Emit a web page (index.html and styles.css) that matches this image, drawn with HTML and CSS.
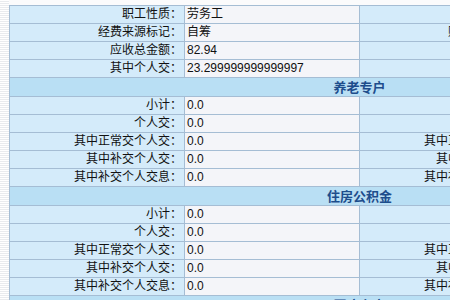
FILE: index.html
```html
<!DOCTYPE html>
<html lang="zh-CN">
<head>
<meta charset="utf-8">
<title>缴费信息</title>
<link rel="stylesheet" href="styles.css">
</head>
<body>
<div class="page">
<table class="info">
<colgroup><col class="c"><col class="c"><col class="c"><col class="c"></colgroup>
<tr><th>职工性质：</th><td>劳务工</td><th></th><td></td></tr>
<tr><th>经费来源标记：</th><td>自筹</td><th>账户类别标记：</th><td></td></tr>
<tr><th>应收总金额：</th><td>82.94</td><th></th><td></td></tr>
<tr><th>其中个人交：</th><td>23.299999999999997</td><th></th><td></td></tr>
<tr class="sec"><td colspan="4">养老专户</td></tr>
<tr><th>小计：</th><td>0.0</td><th>单位交：</th><td>0.0</td></tr>
<tr><th>个人交：</th><td>0.0</td><th>单位交：</th><td>0.0</td></tr>
<tr><th>其中正常交个人交：</th><td>0.0</td><th>其中正常交单位交：</th><td>0.0</td></tr>
<tr><th>其中补交个人交：</th><td>0.0</td><th>其中补交单位交：</th><td>0.0</td></tr>
<tr><th>其中补交个人交息：</th><td>0.0</td><th>其中补交单位交息：</th><td>0.0</td></tr>
<tr class="sec"><td colspan="4">住房公积金</td></tr>
<tr><th>小计：</th><td>0.0</td><th>单位交：</th><td>0.0</td></tr>
<tr><th>个人交：</th><td>0.0</td><th>单位交：</th><td>0.0</td></tr>
<tr><th>其中正常交个人交：</th><td>0.0</td><th>其中正常交单位交：</th><td>0.0</td></tr>
<tr><th>其中补交个人交：</th><td>0.0</td><th>其中补交单位交：</th><td>0.0</td></tr>
<tr><th>其中补交个人交息：</th><td>0.0</td><th>其中补交单位交息：</th><td>0.0</td></tr>
<tr class="sec"><td colspan="4">医疗专户</td></tr>
</table>
</div>
</body>
</html>
```

FILE: styles.css
```css
html, body {
  margin: 0;
  padding: 0;
  overflow: hidden;
}
body {
  width: 450px;
  height: 300px;
  background-color: #fbfbfc;
  background-image: repeating-linear-gradient(to bottom, #ffffff 0, #ffffff 1px, #e9ebee 1px, #e9ebee 2px);
  background-size: 9px 100%;
  background-repeat: no-repeat;
  font-family: "Liberation Sans", "Noto Sans CJK SC", sans-serif;
  font-size: 12px;
  color: #111;
}
.page {
  padding: 5px 0 0 9px;
}
.info {
  border-collapse: collapse;
  table-layout: fixed;
  width: 699px;
}
.info .c {
  width: 175px;
}
.info th, .info td {
  border: 1px solid #a5bdd4;
  height: 17px;
  padding: 0;
  line-height: 15px;
  white-space: nowrap;
  overflow: hidden;
  font-weight: normal;
}
.info th {
  background: #d4ebfa;
  text-align: right;
  padding-right: 2px;
}
.info td {
  background: #f4f5f9;
  text-align: left;
  padding-left: 2px;
}
.info .sec td {
  background: #b9dff4;
  height: 18px;
  text-align: center;
  font-weight: bold;
  font-size: 13px;
  color: #1d4d8c;
  padding: 0;
}
```
